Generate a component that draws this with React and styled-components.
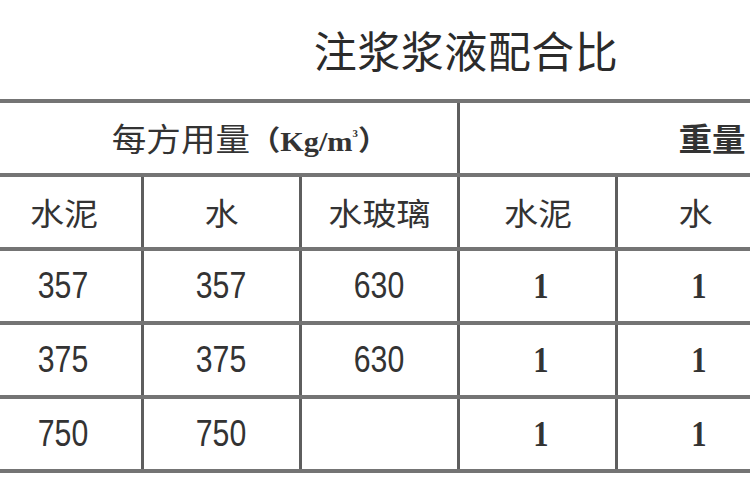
import React from 'react';
import styled, { createGlobalStyle } from 'styled-components';

const GlobalStyle = createGlobalStyle`
  html, body {
    margin: 0;
    padding: 0;
    background: #fff;
    overflow: hidden;
  }
  body {
    font-family: "Liberation Sans", "Noto Sans CJK SC", sans-serif;
    color: #333;
  }
`;

const Page = styled.div`
  width: 750px;
  height: 500px;
  overflow: hidden;
  background: #fff;
`;

const Title = styled.h1`
  margin: 0;
  height: 99px;
  display: flex;
  align-items: center;
  justify-content: center;
  padding-left: 182px;
  padding-bottom: 2px;
  box-sizing: border-box;
  font-family: "Noto Sans CJK SC", sans-serif;
  font-weight: 400;
  font-size: 43px;
  letter-spacing: 0.5px;
  color: #2b2b2b;
`;

const Table = styled.table`
  border-collapse: collapse;
  table-layout: fixed;
  margin-left: -17px;
  width: 948px;
`;

const Col = styled.col`
  width: 158px;
`;

const Row = styled.tr`
  height: 74px;
`;

const Cell = styled.td`
  padding: 0;
  text-align: center;
  vertical-align: middle;
  border-top: 4px solid #747474;
  border-bottom: 4px solid #747474;
  border-left: 3px solid #5e5e5e;
  border-right: 3px solid #5e5e5e;
  color: #333;
  white-space: nowrap;
  overflow: hidden;
`;

const fonts = {
  cjk: '"Noto Sans CJK SC", sans-serif',
  sans: '"Liberation Sans", sans-serif',
  serif: '"Liberation Serif", serif',
};

const Label = styled.span`
  display: inline-block;
  font-family: ${(p) => fonts[p.$font || 'cjk']};
  font-size: ${(p) => p.$size}px;
  font-weight: ${(p) => p.$weight || 400};
  transform: scaleX(${(p) => p.$sx});
  transform-origin: center;
  line-height: 1;
  margin-left: ${(p) => p.$shift || 0}px;
`;

const Unit = styled.span`
  font-family: "Liberation Serif", "Noto Sans CJK SC", serif;
  font-weight: 700;
  font-size: 28px;
`;

const Sup = styled.sup`
  font-size: 10px;
  vertical-align: 14px;
`;

const rows = [
  ['357', '357', '630', '1', '1', ''],
  ['375', '375', '630', '1', '1', ''],
  ['750', '750', '', '1', '1', ''],
];

const subHeads = ['水泥', '水', '水玻璃', '水泥', '水', ''];

export default function App() {
  return (
    <Page>
      <GlobalStyle />
      <Title>注浆浆液配合比</Title>
      <Table>
        <colgroup>
          {subHeads.map((_, i) => (
            <Col key={i} />
          ))}
        </colgroup>
        <tbody>
          <Row>
            <Cell colSpan={3}>
              <Label $size={32} $sx={1.08} $shift={56}>
                每方用量<Unit>（Kg/m<Sup>3</Sup>）</Unit>
              </Label>
            </Cell>
            <Cell colSpan={3}>
              <Label $size={32} $sx={1.05} $weight={700} $shift={32}>重量</Label>
            </Cell>
          </Row>
          <Row>
            {subHeads.map((h, i) => (
              <Cell key={i}>
                <Label $size={31} $sx={1.1}>{h}</Label>
              </Cell>
            ))}
          </Row>
          {rows.map((r, i) => (
            <Row key={i}>
              {r.map((v, j) => (
                <Cell key={j}>
                  {j >= 3 ? (
                    <Label $font="serif" $size={36} $sx={0.85} $weight={700} $shift={6}>{v}</Label>
                  ) : (
                    <Label $font="sans" $size={36} $sx={0.84}>{v}</Label>
                  )}
                </Cell>
              ))}
            </Row>
          ))}
        </tbody>
      </Table>
    </Page>
  );
}
